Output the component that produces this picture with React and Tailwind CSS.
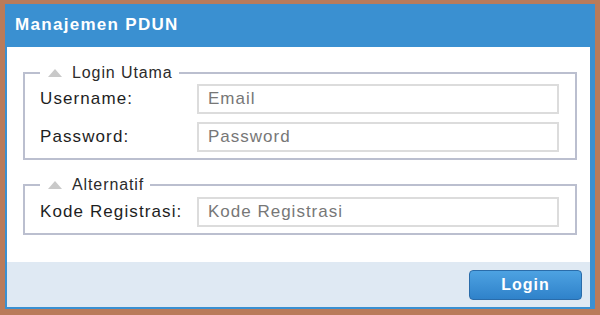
import React from "react";

function Legend({ children }) {
  return (
    <legend className="flex items-center pl-[8px] pr-[6px] text-[16px] leading-[18px] text-[#2b2b2b] tracking-[0.9px]">
      <svg width="14" height="8" viewBox="0 0 14 8" className="mr-[10px]">
        <polygon points="7,0 14,8 0,8" fill="#c9c9c9" />
      </svg>
      {children}
    </legend>
  );
}

function Row({ label, placeholder, className = "" }) {
  return (
    <div className={`flex items-center ${className}`}>
      <label className="w-[157px] shrink-0 text-[17px] text-[#1e1e1e] tracking-[1.1px]">
        {label}
      </label>
      <input
        type="text"
        placeholder={placeholder}
        className="h-[30px] w-[362px] border-2 border-[#dcdcdc] bg-white px-[9px] font-['Liberation_Sans',Arial,sans-serif] text-[17px] tracking-[1px] text-[#555] placeholder:text-[#777] outline-none"
      />
    </div>
  );
}

export default function App() {
  return (
    <div className="w-[600px] h-[315px] bg-[#b97b5a] pt-[4px] pl-[5px] pr-[5px] pb-[6px] font-['Liberation_Sans',Arial,sans-serif]">
      <div className="flex h-full flex-col border-l-2 border-r-[5px] border-b-2 border-[#3a90d1]">
        <div className="flex h-[43px] shrink-0 items-center bg-[#3a90d1] pl-[8px] pb-[2px]">
          <h1 className="text-[17px] font-bold text-white tracking-[1.3px]">
            Manajemen PDUN
          </h1>
        </div>

        <div className="flex-1 bg-white pl-[16px] pr-[13px] pt-[17px]">
          <fieldset className="border-2 border-[#bbbfcf] pl-[15px] pr-[16px] pt-[2px] pb-[6px]">
            <Legend>Login Utama</Legend>
            <Row label="Username:" placeholder="Email" />
            <Row label="Password:" placeholder="Password" className="mt-[8px]" />
          </fieldset>

          <fieldset className="mt-[16px] border-2 border-[#bbbfcf] pl-[15px] pr-[16px] pt-[3px] pb-[6px]">
            <Legend>Alternatif</Legend>
            <Row label="Kode Registrasi:" placeholder="Kode Registrasi" />
          </fieldset>
        </div>

        <div className="flex h-[45px] shrink-0 items-start justify-end bg-[#dfe9f3] pr-[8px] pt-[8px]">
          <button className="h-[30px] w-[113px] rounded-[4px] border border-[#2a6caa] bg-gradient-to-b from-[#4da2e2] to-[#2f82ca] font-['Liberation_Sans',Arial,sans-serif] text-[16px] font-bold text-white tracking-[1px]">
            Login
          </button>
        </div>
      </div>
    </div>
  );
}
